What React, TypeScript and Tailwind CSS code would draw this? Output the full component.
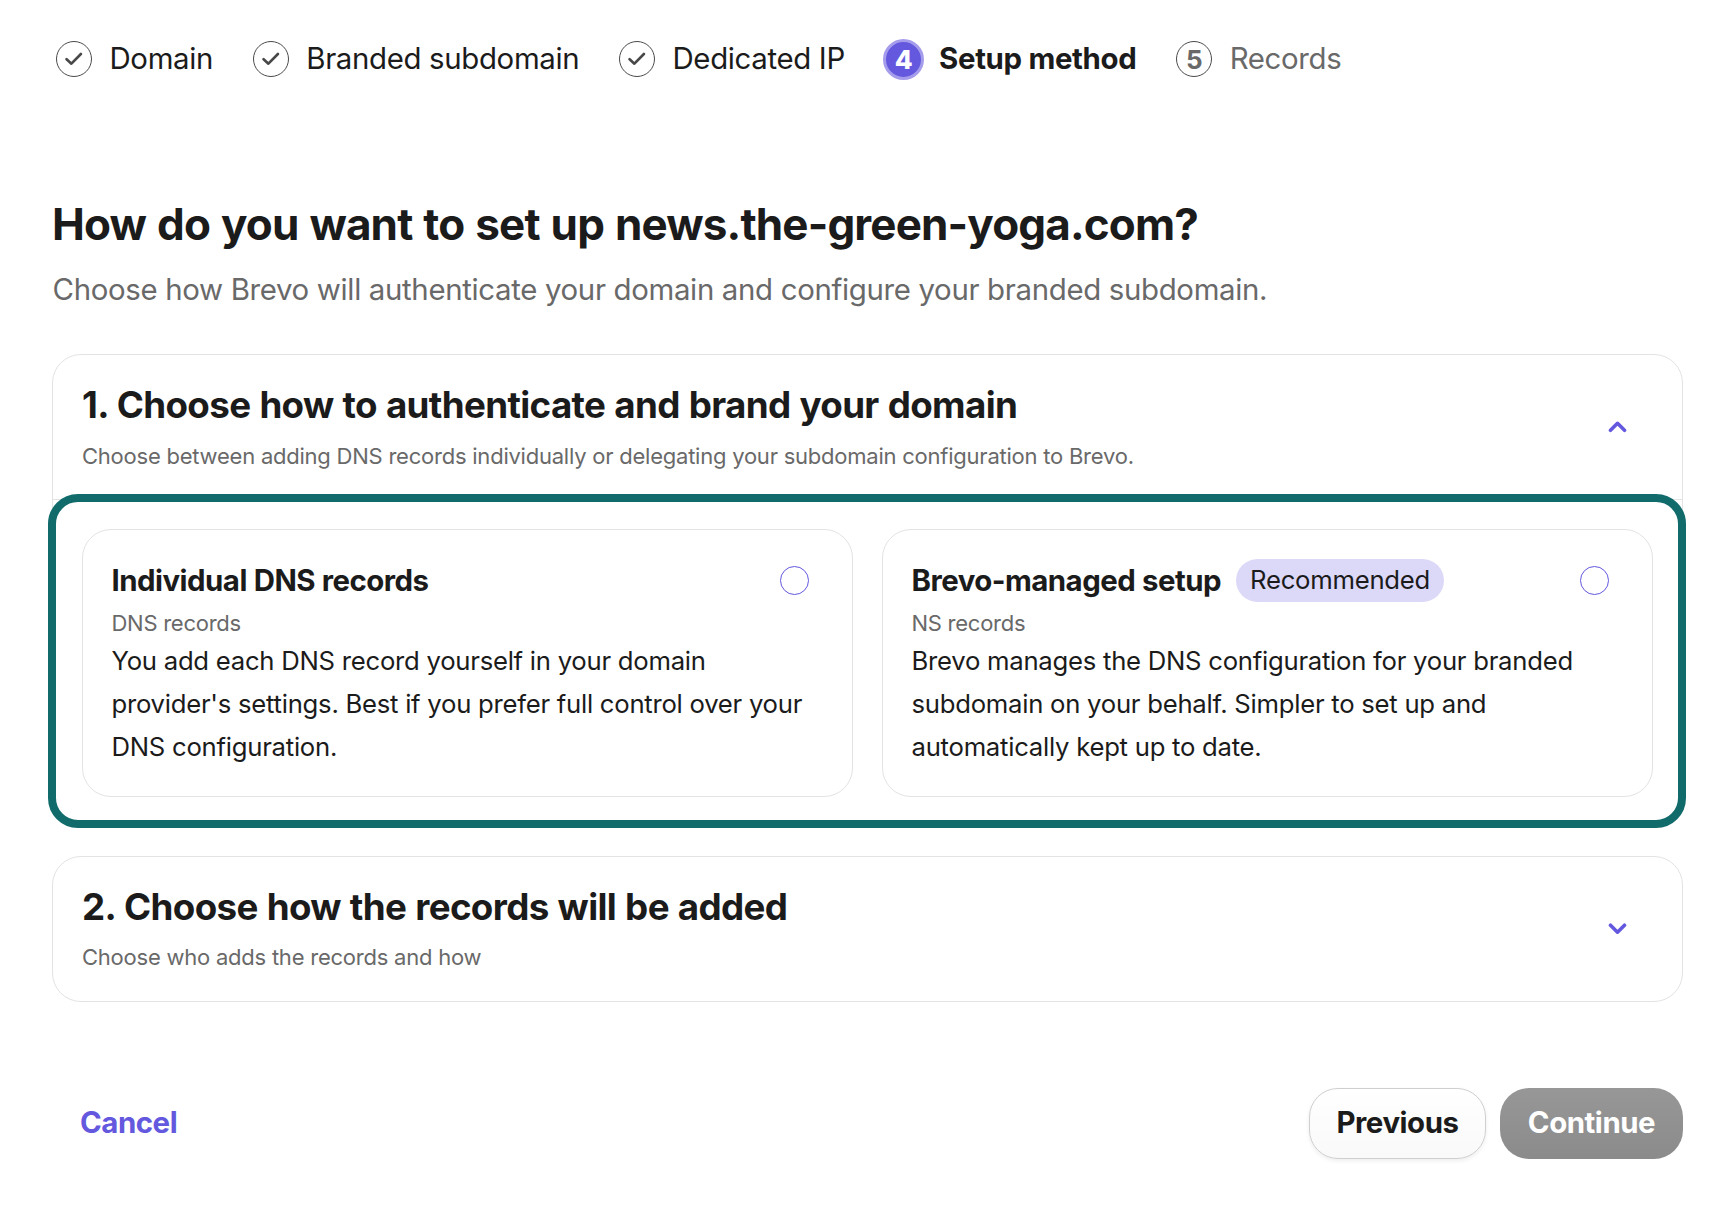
import React, { useState } from 'react';

type StepState = 'done' | 'current' | 'upcoming';

interface Step {
  label: string;
  state: StepState;
}

interface MethodOption {
  id: string;
  title: string;
  recordType: string;
  description: string;
  recommended?: boolean;
}

const steps: Step[] = [
  { label: 'Domain', state: 'done' },
  { label: 'Branded subdomain', state: 'done' },
  { label: 'Dedicated IP', state: 'done' },
  { label: 'Setup method', state: 'current' },
  { label: 'Records', state: 'upcoming' }
];

const options: MethodOption[] = [
  {
    id: 'dns',
    title: 'Individual DNS records',
    recordType: 'DNS records',
    description:
      "You add each DNS record yourself in your domain provider's settings. Best if you prefer full control over your DNS configuration."
  },
  {
    id: 'ns',
    title: 'Brevo-managed setup',
    recordType: 'NS records',
    description:
      'Brevo manages the DNS configuration for your branded subdomain on your behalf. Simpler to set up and automatically kept up to date.',
    recommended: true
  }
];

function StepMarker({ state, number }: { state: StepState; number: number }) {
  if (state === 'current') {
    return (
      <span className="-mr-[2.5px] -ml-[1.5px] flex size-[41px] items-center justify-center rounded-full border-[3px] border-[#a59dec] bg-[#6358de] text-[26px] font-extrabold text-white">
        {number}
      </span>
    );
  }

  return (
    <span className="flex size-9 items-center justify-center rounded-full border border-[#4a4a4a] text-[26px] font-bold text-[#696969]">
      {state === 'done' ? (
        <svg width="18" height="14" viewBox="0 0 18 14" fill="none">
          <path d="M1.6 7.2 6.4 11.7 15.9 2" stroke="#484848" strokeWidth="2.6" strokeLinecap="round" strokeLinejoin="round" />
        </svg>
      ) : (
        number
      )}
    </span>
  );
}

function Chevron({ open }: { open: boolean }) {
  return (
    <svg width="20" height="12" viewBox="0 0 20 12" fill="none">
      <path
        d={open ? 'M3.5 9.3 10.5 2.3 17.5 9.3' : 'M3.5 2.2 10.5 9.2 17.5 2.2'}
        stroke="#6358de"
        strokeWidth="3.6"
        strokeLinecap="round"
        strokeLinejoin="round"
      />
    </svg>
  );
}

interface SectionHeaderProps {
  title: string;
  hint: string;
  open: boolean;
}

function SectionHeader({ title, hint, open }: SectionHeaderProps) {
  return (
    <div className="flex h-36 items-center justify-between pr-[55px] pl-[29px]">
      <div className="self-start pt-7">
        <h2 className="text-[36.75px] leading-[44px] font-[650] tracking-[-0.0175em] [word-spacing:0.9px]">{title}</h2>
        <p className={`text-[22px] leading-[30px] tracking-[-0.23px] text-[#696969] ${open ? 'mt-3.5' : 'mt-[13px]'}`}>
          {hint}
        </p>
      </div>
      <Chevron open={open} />
    </div>
  );
}

interface OptionCardProps {
  option: MethodOption;
  selected: boolean;
  onSelect: (id: string) => void;
}

function OptionCard({ option, selected, onSelect }: OptionCardProps) {
  return (
    <div
      onClick={() => onSelect(option.id)}
      className="h-[268px] cursor-pointer rounded-[29px] border border-[#e3e3e3] pt-[29px] pr-[43px] pl-[28.5px]"
    >
      <div className="flex h-[43px] items-center">
        <h3 className="text-[29.4px] leading-[43px] font-[650] tracking-[-0.0175em] [word-spacing:0.4px]">{option.title}</h3>
        {option.recommended && (
          <span className="ml-[15px] flex h-[43px] items-center rounded-full bg-[#dcd8f8] px-3.5 text-[25.7px]">
            Recommended
          </span>
        )}
        <span className="ml-auto flex size-[29px] items-center justify-center rounded-full border border-[#6358de]">
          {selected && <span className="size-3.5 rounded-full bg-[#6358de]" />}
        </span>
      </div>
      <p className="mt-[5px] text-[22px] leading-8 text-[#696969]">{option.recordType}</p>
      <p className="w-[700px] text-[25.7px] leading-[43px]">{option.description}</p>
    </div>
  );
}

export default function App() {
  const [selected, setSelected] = useState<string | null>(null);

  return (
    <div className="h-[1206px] w-[1728px] overflow-hidden bg-white pt-[38px] pr-[45px] pl-[52px] font-['Inter',sans-serif] tracking-[-0.26px] text-[#1b1b1b]">
      {/* Wizard progress */}
      <nav className="flex h-[42px] items-center gap-[39.7px] pl-1">
        {steps.map((step, i) => (
          <div key={step.label} className="flex items-center gap-[17.5px]">
            <StepMarker state={step.state} number={i + 1} />
            <span
              className={`text-[29.4px] leading-[42px] whitespace-nowrap ${
                step.state === 'current'
                  ? 'font-[650] tracking-[-0.011em]'
                  : step.state === 'upcoming'
                    ? 'tracking-[-0.0115em] text-[#696969]'
                    : 'tracking-[-0.0115em]'
              }`}
            >
              {step.label}
            </span>
          </div>
        ))}
      </nav>

      <h1 className="mt-[116px] text-[44px] leading-[56px] font-[650] tracking-[-0.0195em] [word-spacing:1.4px]">
        How do you want to set up news.the-green-yoga.com?
      </h1>
      <p className="mt-4 pl-[0.5px] text-[29.4px] leading-[44px] tracking-[-0.0113em] text-[#696969]">
        Choose how Brevo will authenticate your domain and configure your branded subdomain.
      </p>

      {/* Section 1 */}
      <section className="mt-[42px] h-[472px] rounded-[29px] border border-[#e3e3e3]">
        <SectionHeader
          title="1. Choose how to authenticate and brand your domain"
          hint="Choose between adding DNS records individually or delegating your subdomain configuration to Brevo."
          open
        />
        <div className="relative border-t border-[#e3e3e3]">
          <div className="absolute -top-1.5 -left-[5px] h-[334px] w-[1638px] rounded-[30px] border-8 border-[#116b6b] bg-white" />
          <div className="relative grid grid-cols-2 gap-[29px] px-[29px] pt-[29px]">
            {options.map(option => (
              <OptionCard key={option.id} option={option} selected={selected === option.id} onSelect={setSelected} />
            ))}
          </div>
        </div>
      </section>

      {/* Section 2 */}
      <section className="mt-[30px] rounded-[29px] border border-[#e3e3e3]">
        <SectionHeader title="2. Choose how the records will be added" hint="Choose who adds the records and how" open={false} />
      </section>

      <footer className="mt-[86px] flex h-[71px] items-center text-[29.4px] font-[650] tracking-[-0.45px]">
        <button className="ml-7 text-[#6358de]">Cancel</button>
        <button className="ml-auto h-[71px] w-[177px] rounded-[29px] border border-[#cfcfcf] bg-gradient-to-b from-white to-[#f9f9f9] shadow-[0_2px_4px_rgba(0,0,0,0.07)]">
          Previous
        </button>
        <button className="ml-3.5 h-[71px] w-[183px] rounded-[29px] bg-gradient-to-b from-[#979797] to-[#8b8b8b] text-white">
          Continue
        </button>
      </footer>
    </div>
  );
}
